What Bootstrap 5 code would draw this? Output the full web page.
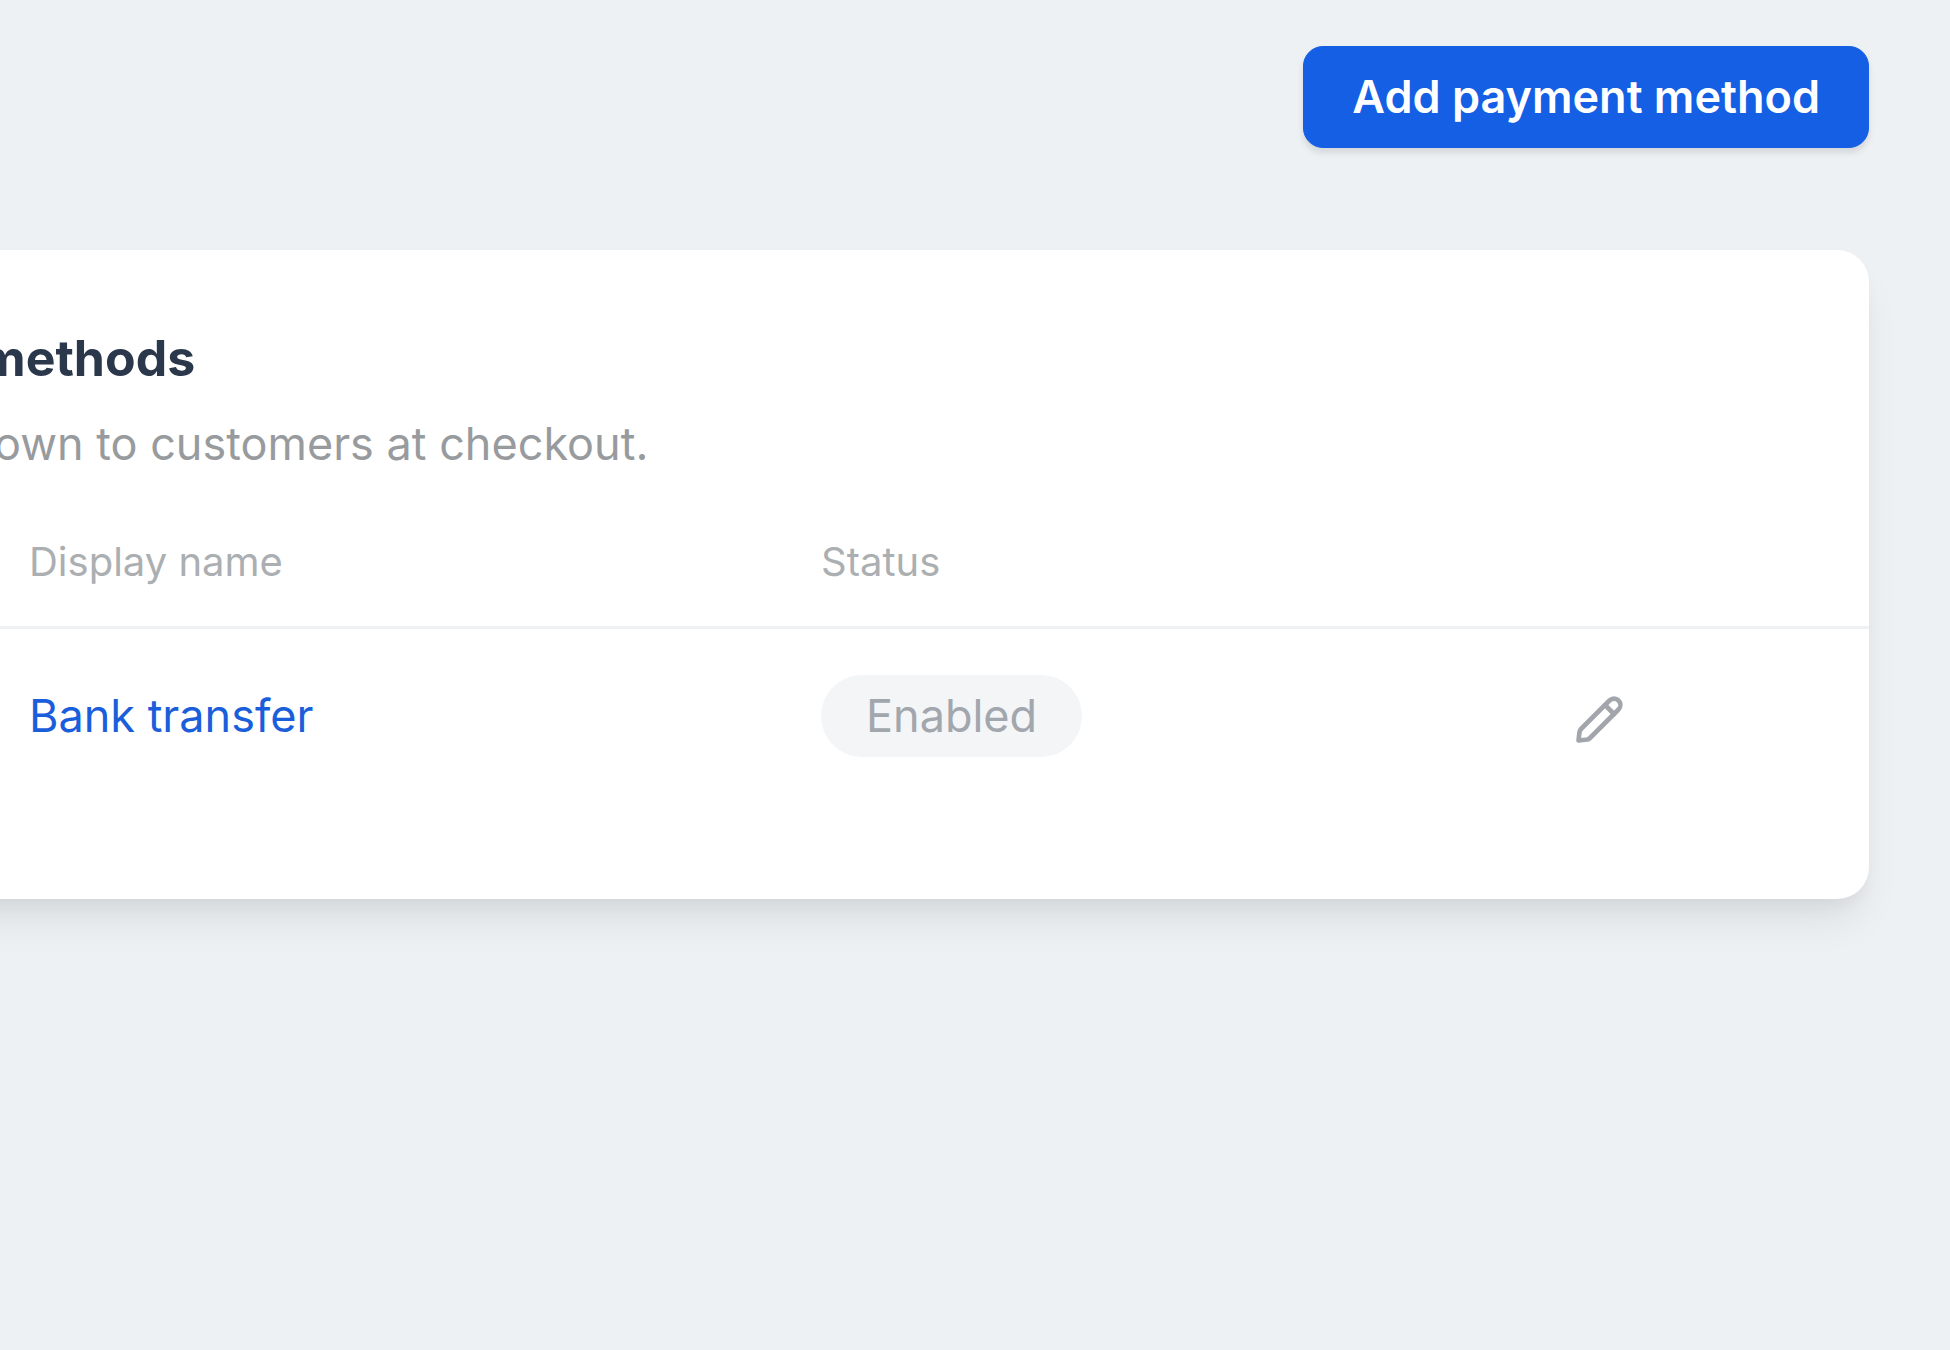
<!DOCTYPE html>
<html lang="en">
<head>
<meta charset="utf-8">
<meta name="viewport" content="width=device-width, initial-scale=1">
<title>Payment methods</title>
<link href="https://cdn.jsdelivr.net/npm/bootstrap@5.3.0/dist/css/bootstrap.min.css" rel="stylesheet">
<style>
  body { background: #edf1f4; font-family: Inter, "Liberation Sans", sans-serif; font-size: 45px; line-height: 56px; overflow-x: hidden; }
  .page-shell { padding: 46px 81px 64px 0; }
  .btn-add { --bs-btn-bg: #145fe4; --bs-btn-border-color: #145fe4; --bs-btn-color: #fff; --bs-btn-hover-bg: #0f53cb; --bs-btn-hover-color: #fff;
    --bs-btn-font-size: 45px; --bs-btn-font-weight: 600; --bs-btn-line-height: 56px; --bs-btn-padding-y: 22px; --bs-btn-padding-x: 48px; --bs-btn-border-radius: 20px;
    box-shadow: 0 5px 6px rgba(0, 0, 0, .1); }
  .methods-card { --bs-card-border-radius: 32px; --bs-card-border-width: 0; margin: 102px 0 0 -80px; padding: 78px 0 96px;
    box-shadow: 0 28px 42px -8px rgba(0, 0, 0, .08), 0 12px 18px -6px rgba(0, 0, 0, .05); }
  .methods-title { color: #2b374b; font-size: 50px; line-height: 60px; padding-left: 60px; }
  .methods-note { color: #989b9e; margin-top: 28px; padding-left: 74px; }
  .methods-table { table-layout: fixed; --bs-table-bg: transparent; margin-top: 50px; }
  .methods-table th, .methods-table td { padding: 0 0 0 109px; vertical-align: middle; }
  .methods-table th { color: #abafb2; font-size: 40px; font-weight: 400; height: 105px; padding-bottom: 24px; border-bottom: 3px solid #eff0f2; }
  .methods-table td { height: 176px; border: 0; }
  .col-name { width: 792px; }
  .col-status { width: 749px; }
  .link-method { color: #1a5edb; }
  .status-pill { --bs-badge-font-size: 45px; --bs-badge-font-weight: 400; --bs-badge-color: #a2a7ad; --bs-badge-padding-y: 13px; --bs-badge-padding-x: 45px;
    background: #f3f5f7; line-height: 56px; }
  .btn-edit { --bs-btn-color: #a2a5ac; --bs-btn-padding-x: 0; --bs-btn-padding-y: 0; --bs-btn-border-width: 0; padding-top: 6px; }
</style>
<script src="https://cdn.jsdelivr.net/npm/bootstrap@5.3.0/dist/js/bootstrap.bundle.min.js"></script>
</head>
<body>
<main class="page-shell">
  <div class="d-flex justify-content-end">
    <button type="button" class="btn btn-add">Add payment method</button>
  </div>
  <section class="card methods-card">
    <h1 class="methods-title fw-bold mb-0">methods</h1>
    <p class="methods-note mb-0">own to customers at checkout.</p>
    <table class="table methods-table mb-0">
      <colgroup><col class="col-name"><col class="col-status"><col></colgroup>
      <thead>
        <tr><th scope="col">Display name</th><th scope="col">Status</th><th scope="col" aria-label="Actions"></th></tr>
      </thead>
      <tbody>
        <tr>
          <td><a href="#" class="link-method text-decoration-none">Bank transfer</a></td>
          <td><span class="badge rounded-pill status-pill">Enabled</span></td>
          <td>
            <button type="button" class="btn btn-edit d-flex" aria-label="Edit Bank transfer">
              <svg width="60" height="60" viewBox="0 0 60 60" fill="none" stroke="currentColor" stroke-width="4.6" stroke-linecap="round" stroke-linejoin="round" aria-hidden="true"><path d="M39.500 11.500a6.200 6.200 0 0 1 9 9L20 49q-1 1-2.500 1.500L8.500 51.500 9.500 43q.4-1.700 1.500-3Z"/><path d="m35 16 9 9"/></svg>
            </button>
          </td>
        </tr>
      </tbody>
    </table>
  </section>
</main>
</body>
</html>
